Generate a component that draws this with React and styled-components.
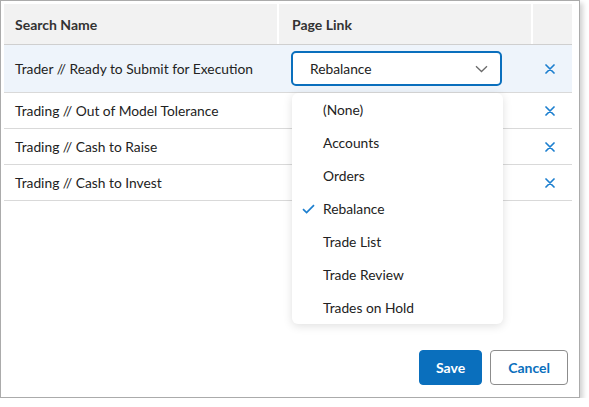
import React from "react";
import styled, { createGlobalStyle } from "styled-components";

const Global = createGlobalStyle`
  html, body { margin: 0; padding: 0; background: #ffffff; }
  body { font-family: Lato, "Open Sans", sans-serif; color: #222; }
`;

const COLS = "273px 252px 39px";

const Frame = styled.div`
  position: relative;
  box-sizing: border-box;
  width: 580px;
  height: 398px;
  border: 1px solid #ababab;
  box-shadow: 3px 3px 5px rgba(0, 0, 0, 0.18);
  background: #fff;
  padding: 3px 6px 0 3px;
  display: flex;
  flex-direction: column;
`;

const Table = styled.div`
  width: 568px;
  display: flex;
  flex-direction: column;
`;

const HeaderRow = styled.div`
  display: grid;
  grid-template-columns: ${COLS};
  column-gap: 2px;
  border-bottom: 1px solid #cfcfcf;
`;

const HeaderCell = styled.div`
  background: #f2f2f2;
  height: 40px;
  display: flex;
  align-items: center;
  padding-left: ${(p) => p.$pad}px;
  font-size: 14px;
  font-weight: 700;
  color: #333;
`;

const Row = styled.div`
  box-sizing: border-box;
  display: grid;
  grid-template-columns: ${COLS};
  column-gap: 2px;
  height: ${(p) => p.$h}px;
  background: ${(p) => (p.$active ? "#eef4fb" : "#fff")};
  border-bottom: 1px solid #d9d9d9;
`;

const Cell = styled.div`
  display: flex;
  align-items: center;
  padding-left: ${(p) => p.$pad}px;
  font-size: 13.8px;
  color: #222;
  position: relative;
`;

const Select = styled.div`
  box-sizing: border-box;
  width: 211px;
  height: 35px;
  border: 2px solid #0a6fbd;
  border-radius: 5px;
  background: #fff;
  display: flex;
  align-items: center;
  justify-content: space-between;
  padding: 0 12px 0 17px;
  font-size: 13.8px;
  color: #222;
`;

const Menu = styled.ul`
  position: absolute;
  left: 291px;
  top: 92px;
  width: 211px;
  margin: 0;
  padding: 0;
  list-style: none;
  background: #fff;
  border-radius: 6px;
  box-shadow: 0 2px 10px rgba(0, 0, 0, 0.13);
  z-index: 5;
`;

const MenuItem = styled.li`
  height: 33px;
  display: flex;
  align-items: center;
  padding-left: 31px;
  position: relative;
  font-size: 13.8px;
  color: #222;
`;

const Check = styled.svg`
  position: absolute;
  left: 10px;
  top: 12px;
`;

const Footer = styled.div`
  margin-top: auto;
  display: flex;
  justify-content: flex-end;
  gap: 8px;
  padding: 0 5px 12px 0;
`;

const Button = styled.button`
  box-sizing: border-box;
  height: 35px;
  padding: 0 ${(p) => (p.$primary ? 16 : 17)}px;
  border-radius: 4px;
  font-family: Lato, "Open Sans", sans-serif;
  font-size: 14px;
  font-weight: 700;
  cursor: pointer;
  background: ${(p) => (p.$primary ? "#0a6fbd" : "#fff")};
  color: ${(p) => (p.$primary ? "#fff" : "#0a6fbd")};
  border: 1px solid ${(p) => (p.$primary ? "#0a6fbd" : "#8c8c8c")};
`;

const XIcon = () => (
  <svg width="10" height="10" viewBox="0 0 10 10">
    <path d="M1 1 L9 9 M9 1 L1 9" stroke="#1c7fcf" strokeWidth="1.7" strokeLinecap="round" />
  </svg>
);

const Chevron = () => (
  <svg width="13" height="8" viewBox="0 0 13 8">
    <path d="M1 1.2 L6.5 6.5 L12 1.2" fill="none" stroke="#6b6b6b" strokeWidth="1.3" />
  </svg>
);

const rows = [
  "Trader // Ready to Submit for Execution",
  "Trading // Out of Model Tolerance",
  "Trading // Cash to Raise",
  "Trading // Cash to Invest",
];

const options = ["(None)", "Accounts", "Orders", "Rebalance", "Trade List", "Trade Review", "Trades on Hold"];

export default function App() {
  return (
    <>
      <Global />
      <Frame>
        <Table>
          <HeaderRow>
            <HeaderCell $pad={11}>Search Name</HeaderCell>
            <HeaderCell $pad={13}>Page Link</HeaderCell>
            <HeaderCell $pad={0} />
          </HeaderRow>
          {rows.map((r, i) => (
            <Row key={r} $active={i === 0} $h={i === 0 ? 48 : 36}>
              <Cell $pad={11}>{r}</Cell>
              <Cell $pad={12}>
                {i === 0 && (
                  <Select>
                    <span>Rebalance</span>
                    <Chevron />
                  </Select>
                )}
              </Cell>
              <Cell $pad={12}>
                <XIcon />
              </Cell>
            </Row>
          ))}
        </Table>
        <Menu>
          {options.map((o) => (
            <MenuItem key={o}>
              {o === "Rebalance" && (
                <Check width="13" height="10" viewBox="0 0 13 10">
                  <path d="M1 5.2 L4.6 8.6 L12 1.2" fill="none" stroke="#1c7fcf" strokeWidth="1.7" />
                </Check>
              )}
              {o}
            </MenuItem>
          ))}
        </Menu>
        <Footer>
          <Button $primary>Save</Button>
          <Button>Cancel</Button>
        </Footer>
      </Frame>
    </>
  );
}
